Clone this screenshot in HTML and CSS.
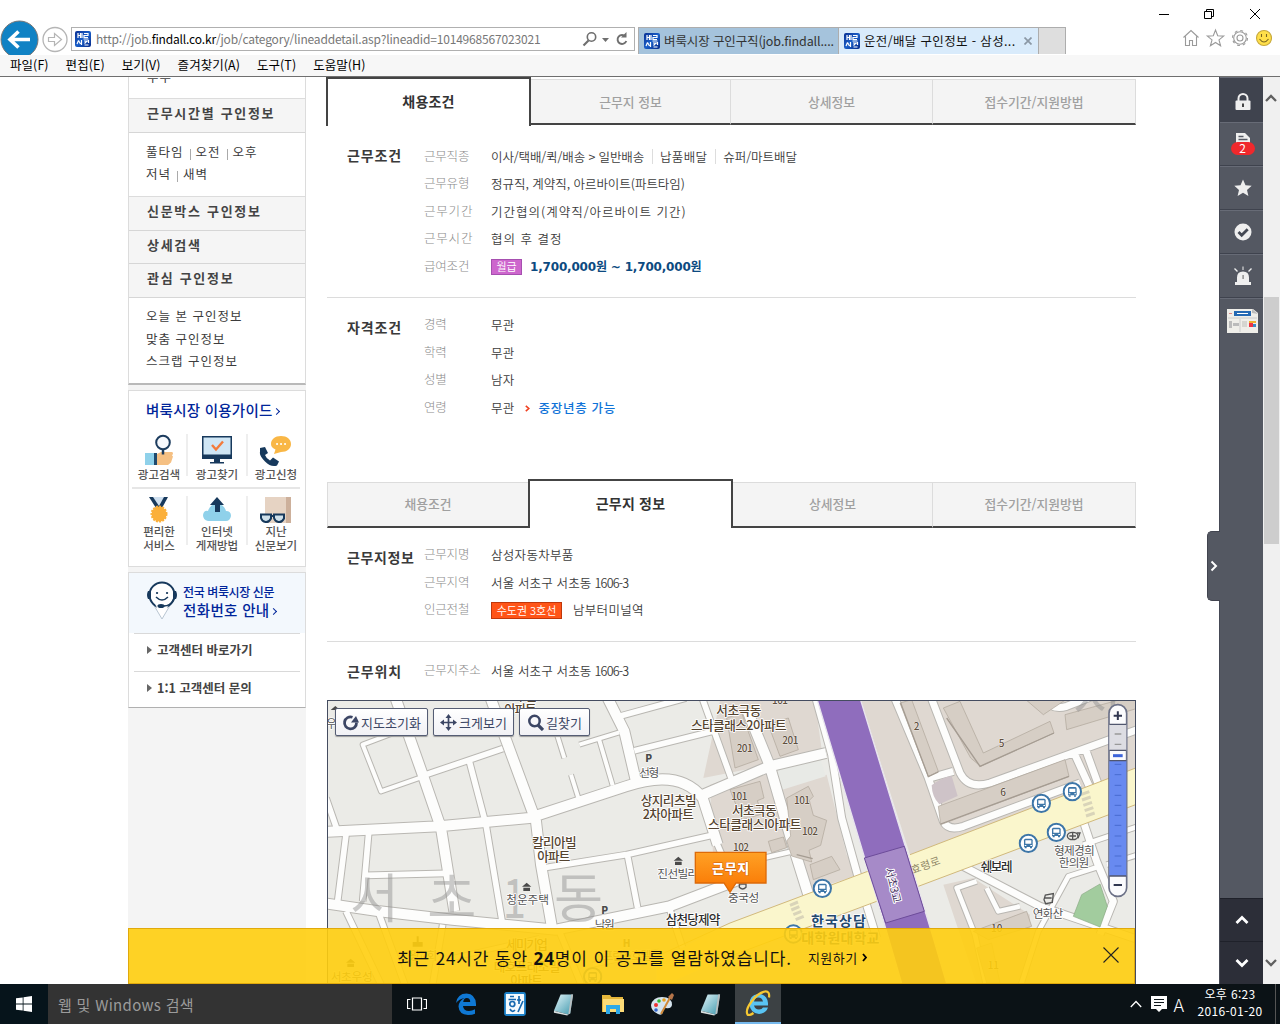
FILE: index.html
```html
<!DOCTYPE html>
<html lang="ko">
<head>
<meta charset="utf-8">
<title>운전/배달 구인정보 - 삼성자동차부품</title>
<link rel="stylesheet" href="styles.css">
</head>
<body>
<svg class="defs" width="0" height="0">
  <defs>
    <linearGradient id="gFav" x1="0" y1="0" x2="1" y2="1"><stop offset="0" stop-color="#0a2f92"/><stop offset=".5" stop-color="#1a5fc8"/><stop offset="1" stop-color="#082a88"/></linearGradient>
    <linearGradient id="gPin" x1="0" y1="0" x2="0" y2="1"><stop offset="0" stop-color="#ffa125"/><stop offset="1" stop-color="#f97400"/></linearGradient>
    <linearGradient id="gNote" x1="0" y1="0" x2="1" y2="1"><stop offset="0" stop-color="#e4f6fa"/><stop offset="1" stop-color="#3f98ad"/></linearGradient>
    <symbol id="fav" viewBox="0 0 16 16"><rect width="16" height="16" rx="2" fill="url(#gFav)"/><path d="M3 2v5M5.500 2v5M3 4.500h2.500M7 2v5M9 2.500h4v2H9v2h4M8.500 8h5M3.500 9.500 2 13M3.500 9.500 5.500 13M6.500 9v5M9 10h3l-2.500 2.500M13.500 9v3M9.500 14h4" stroke="#fff" stroke-width="1.200" fill="none"/></symbol>
    <symbol id="note" viewBox="0 0 24 24"><path d="M9 2h13l-3 20-2 1L2 19z" fill="url(#gNote)"/><path d="M22 2l-3 20-2 1 3-21z" fill="#b9bec0"/><path d="M2 19l15 4-1 1L2 21z" fill="#d8dfe0"/></symbol>
    <symbol id="bus" viewBox="0 0 60 60"><circle cx="30" cy="30" r="26" fill="#fff" stroke="#3d76a8" stroke-width="6"/><path d="M21 16h18q4 0 4 5v20H17V21q0-5 4-5z" fill="#3d76a8"/><path d="M21 21h18v10H21zM19 35h5v3h-5zM36 35h5v3h-5z" fill="#fff"/><path d="M19 41h6v4h-6zM35 41h6v4h-6z" fill="#3d76a8"/></symbol>
  </defs>
</svg>

<header class="chrome">
  <div class="bar">
    <svg class="nav" width="71" height="36" viewBox="0 0 71 36">
      <circle cx="19.500" cy="20.500" r="18.500" fill="#1082c4" stroke="#777" stroke-width="1"/>
      <path d="M10 20.500h20M18.500 12.500l-8.500 8 8.500 8" fill="none" stroke="#fff" stroke-width="3.600"/>
      <circle cx="55" cy="20.500" r="12" fill="#fff" stroke="#b5b5b5" stroke-width="1.300"/>
      <path d="M48.500 18.500h6v-4l7 6-7 6v-4h-6z" fill="none" stroke="#b5b5b5" stroke-width="1.200"/>
    </svg>
    <div class="address">
      <svg width="16" height="16"><use href="#fav"/></svg>
      <span class="url">http://job.<b>findall.co.kr</b>/job/category/lineaddetail.asp?lineadid=1014968567023021</span>
      <svg class="addr-icons" width="48" height="18" viewBox="0 0 48 18" fill="none" stroke="#6f6f6f"><circle cx="9.500" cy="7" r="4.200" stroke-width="1.600"/><path d="M6.500 10.500l-5 5" stroke-width="2.200"/><path d="M20 8h7l-3.500 4z" fill="#6f6f6f" stroke="none"/><path d="M43.500 6.500a4.500 4.500 0 1 0 .8 4.500" stroke-width="1.900"/><path d="M44.500 2v5.500H39z" fill="#6f6f6f" stroke="none"/></svg>
    </div>
    <div class="tabs">
      <div class="tab"><svg width="16" height="16"><use href="#fav"/></svg><span class="t1">벼룩시장 구인구직(job.findall....</span></div>
      <div class="tab on"><svg width="16" height="16"><use href="#fav"/></svg><span class="t2">운전/배달 구인정보 - 삼성...</span><svg class="x" width="8" height="8" viewBox="0 0 8 8"><path d="M.5.500l7 7M7.500.500l-7 7" stroke="#8b98a5" stroke-width="1.700"/></svg></div>
      <div class="tab new"></div>
    </div>
    <div class="win">
      <svg width="104" height="14" viewBox="0 0 104 14" fill="none" stroke="#000"><path d="M1 7.500h10M46.500 4.500h7v7h-7zM48.500 4v-1.500h7v7H54M92 2l10 10M102 2L92 12"/></svg>
      <svg class="tools" width="92" height="20" viewBox="0 0 92 20" fill="none" stroke="#9a9a9a" stroke-width="1.100"><path d="M3.500 9.500L11 2.500l7.500 7M5.500 8.500v9h4v-5h3v5h4v-9"/><path d="M35.500 2l2.200 5.800 6 .3-4.700 3.800 1.600 5.900-5.100-3.300-5.100 3.300 1.600-5.900-4.700-3.800 6-.3z"/><circle cx="60" cy="10" r="3"/><circle cx="60" cy="10" r="6.300"/><circle cx="60" cy="10" r="7.500" stroke-dasharray="2.900 3"/><circle cx="84" cy="10" r="7.500" fill="#ffdf4a" stroke="#c7a93c"/><path d="M81.500 6v3M86.500 6v3M79.500 11q4.500 6 9 0" stroke="#7a6420"/></svg>
    </div>
  </div>
  <nav class="menu"><span>파일(F)</span><span>편집(E)</span><span>보기(V)</span><span>즐겨찾기(A)</span><span>도구(T)</span><span>도움말(H)</span></nav>
</header>

<div class="page">
  <aside class="side">
    <section class="box first">
      <div class="cut">부부</div>
      <h3 class="h35">근무시간별 구인정보</h3>
      <div class="links two"><p>풀타임<i></i>오전<i></i>오후</p><p>저녁<i></i>새벽</p></div>
      <h3 class="h35">신문박스 구인정보</h3>
      <h3 class="h33 flat">상세검색</h3>
      <h3 class="h34 flat">관심 구인정보</h3>
      <div class="links three"><p>오늘 본 구인정보</p><p>맞춤 구인정보</p><p>스크랩 구인정보</p></div>
    </section>
    <section class="box guide">
      <h4>벼룩시장 이용가이드<b class="gt"></b></h4>
      <div class="grid g1">
        <div><svg width="32" height="32" viewBox="0 0 32 32"><path d="M2 19h10v12H2z" fill="#8fd1ea"/><path d="M11 19h3v12h-3z" fill="#1f4a6e"/><path d="M14 20l4-2h11q2 1 0 3.500l1 1-1 3-1 3-3 2.500H14z" fill="#f5c083"/><circle cx="20" cy="8.500" r="6.800" fill="#f6f9fd" stroke="#1c3c5e" stroke-width="2"/><path d="M20 15.500v5" stroke="#1c3c5e" stroke-width="2.500"/></svg><p>광고검색</p></div>
        <div><svg width="32" height="32" viewBox="0 0 32 32"><path d="M1 2h30v23H1z" fill="#17395c"/><path d="M2.500 3.500h27v17h-27z" fill="#cfe6f5"/><path d="M13 25h6v3h4v1.500H9V28h4z" fill="#17395c"/><path d="M11 11l4 4.500 7-8" fill="none" stroke="#f37b3c" stroke-width="2.400"/></svg><p>광고찾기</p></div>
        <div><svg width="34" height="32" viewBox="0 0 34 32"><path d="M22 2c6 0 10 3.500 10 8s-4 8-10 8l-7 2 1.500-4.500C13 14 12 12 12 10c0-4.500 4-8 10-8z" fill="#f9b746"/><path d="M18 10h.1M22 10h.1M26 10h.1" stroke="#fff" stroke-width="2" stroke-linecap="round"/><path d="M1 14l5-1 3 6-3 2q1.500 4 5 5.500l3-3 6 4-2 4q-6 2-12-4T1 18z" fill="#17395c"/></svg><p>광고신청</p></div>
      </div>
      <div class="grid g2">
        <div><svg width="30" height="27" viewBox="0 0 30 27"><path d="M5 1h19l-6 11h-6z" fill="#17395c"/><path d="M9 1l6 9 5-9z" fill="#cfe0f0"/><circle cx="15" cy="18" r="7.500" fill="#fbb03b" stroke="#fbb03b" stroke-width="2" stroke-dasharray="2 1.200"/></svg><p>편리한<br>서비스</p></div>
        <div><svg width="30" height="27" viewBox="0 0 30 27"><path d="M6 25q-5-1-5-6 1-5 5-4 2-7 9-7t9 7q5 0 5 5-1 5-5 5z" fill="#8fd1ea"/><path d="M15 1l7 8h-4v7h-5V9H8z" fill="#17395c"/></svg><p>인터넷<br>게재방법</p></div>
        <div><svg width="34" height="27" viewBox="0 0 34 27"><path d="M6 1h26v26H6z" fill="#e6d3c3"/><path d="M27 1h5v26h-5z" fill="#cdb09b"/><path d="M2 18.500h10v4q-2 4-5.500 3.500T2 22zM15 18.500h10v4q-2 4-5.500 3.500T15 22z" fill="#cfe0ea" stroke="#17395c" stroke-width="2"/><path d="M12 20h3" stroke="#17395c" stroke-width="2"/></svg><p>지난<br>신문보기</p></div>
      </div>
    </section>
    <section class="box call">
      <div class="tel">
        <svg width="32" height="40" viewBox="0 0 32 40"><path d="M3 16L16 38l13-22z" fill="#fff" stroke="#b9c6d2"/><circle cx="16" cy="14" r="12.500" fill="#fff" stroke="#17395c" stroke-width="2"/><path d="M9 23q7 6 14 0L16 36z" fill="#fff"/><path d="M2 10h3v8H2q-2-4 0-8zM27 10h3q2 4 0 8h-3z" fill="#17395c"/><path d="M11 12h.1M21 12h.1" stroke="#17395c" stroke-width="2.200" stroke-linecap="round"/><path d="M10 16q6 6 12 0M28 18q-3 7-11 7" fill="none" stroke="#17395c" stroke-width="1.500"/><ellipse cx="15" cy="25" rx="3.500" ry="2" fill="#17395c"/></svg>
        <div><p class="s">전국 벼룩시장 신문</p><p class="l">전화번호 안내<b class="gt"></b></p></div>
      </div>
      <div class="cs">고객센터 바로가기</div>
      <div class="cs">1:1 고객센터 문의</div>
    </section>
  </aside>

  <main class="main">
    <div class="jobtabs a"><div class="on">채용조건</div><div>근무지 정보</div><div>상세정보</div><div>접수기간/지원방법</div></div>
    <section class="sec s1">
      <h2>근무조건</h2>
      <dl>
        <dt>근무직종</dt><dd><span class="tight">이사/택배/퀵/배송 &gt; 일반배송</span><i></i><span>납품배달</span><i></i><span class="snug">슈퍼/마트배달</span></dd>
        <dt>근무유형</dt><dd class="snug">정규직, 계약직, 아르바이트(파트타임)</dd>
        <dt class="w">근무기간</dt><dd class="wide">기간협의(계약직/아르바이트 기간)</dd>
        <dt class="w">근무시간</dt><dd class="wide">협의 후 결정</dd>
        <dt>급여조건</dt><dd><em class="pay">월급</em><strong>1,700,000원 ~ 1,700,000원</strong></dd>
      </dl>
    </section>
    <section class="sec s2">
      <h2>자격조건</h2>
      <dl>
        <dt>경력</dt><dd>무관</dd>
        <dt>학력</dt><dd>무관</dd>
        <dt>성별</dt><dd>남자</dd>
        <dt>연령</dt><dd>무관<svg class="arr" width="5" height="7" viewBox="0 0 5 7"><path d="M.8.800l3 2.700-3 2.700" fill="none" stroke="#f04020" stroke-width="1.600"/></svg><a>중장년층 가능</a></dd>
      </dl>
    </section>
    <div class="jobtabs b"><div>채용조건</div><div class="on">근무지 정보</div><div>상세정보</div><div>접수기간/지원방법</div></div>
    <section class="sec s3">
      <h2>근무지정보</h2>
      <dl>
        <dt>근무지명</dt><dd>삼성자동차부품</dd>
        <dt>근무지역</dt><dd class="addr">서울 서초구 서초동 <span>1606-3</span></dd>
        <dt>인근전철</dt><dd><em class="line3">수도권 3호선</em>남부터미널역</dd>
      </dl>
    </section>
    <section class="sec s4">
      <h2>근무위치</h2>
      <dl><dt>근무지주소</dt><dd class="addr">서울 서초구 서초동 <span>1606-3</span></dd></dl>
    </section>
    <div class="map">
      <svg class="canvas" width="807" height="283" viewBox="6 9 2421 849" preserveAspectRatio="none">
        <rect x="0" y="0" width="2430" height="870" fill="#ebebe7"/>
        <g transform="translate(1212 0)">
          <path d="M393 9H1230V205L540 470zM-30 9H255l22 160L-80 240zM-60 260L110 205l75 240-235 50zM140 270l150-40 60 240 40 60-160 50zM640 560l90-20 170 110v210H740z" fill="#dfd8d1"/>
          <path d="M140 210l130-30 17 55-130 40z" fill="#e8eae6"/>
        </g>
        <defs>
          <g id="roads" fill="none" stroke-linejoin="round">
            <path class="r-wide" d="M205-10L290 230L345 390L385 640M840-10L895 100L930 250M490-10L560 180L630 370L645 500L680 700M-10 402L340 385L610 360L900 265Q1060 210 1130 300L1175 440M-10 615L160 640L380 665L690 695L1030 625L1240 545M1120 295L1330 205L1500 165M1265 40L1330 200L1400 440L1450 600"/>
            <path class="r-mid" d="M300 230L530 152M430 190L480 380L530 680M650 510L900 470L1165 410M905 475L935 630M880 55L1080 0M925 158L1160 100M1125-10L1215 240M60 410L35 610M128 405L110 610M120 532L360 526M0 300L35 400M1170 430L1220 545M60 640L170 870M350 680L320 860M700 700L770 870M1030 630L1070 750M160 650L240 870"/>
            <path class="r-thin" d="M215 100L110 140L165 280L285 238M760 140L880 103M818 120L860 262M690 100L715 180M735 230L757 300M380 780L640 720M800 800L1000 760"/>
            <g transform="translate(1212 0)">
              <path class="r-main" d="M255-10L305 170L335 360L385 540L440 720M600-10L690 225Q715 275 780 255L1250 85M490-10L595 240L640 370Q655 400 700 385L1050 255M600 240L670 220M940-10Q960 40 1010 25L1100-10M1030 160L1080 270L1060 370L1100 490L1150 610L1110 710M1065 150L1105 260M690 500L930 625L1240 730"/>
              <path class="r-side" d="M100 480L195 458M1110 505L1015 535L925 700L870 870M770 570L805 640L870 625M740 550L680 570L735 710L770 870M1060 440L1240 380M1130 500L1240 465"/>
            </g>
          </g>
        </defs>
        <use href="#roads" class="casing" stroke="#b9b7b2"/>
        <use href="#roads" stroke="#fdfdfc"/>
        <g transform="translate(1212 0)">
          <g fill="#d6cec5" stroke="#aea498" stroke-width="2">
            <path d="M-10 60l45-15 50 140-70 25zM115 80l60-20 30 95-55 20zM0 275l90-25 12 50-20 8 14 40-60 18zM170 300l65-35 15 30-12 12 12 45 40 15-18 75-35 15 8 35-60-18-15-45 12-15zM115 430l45-13 10 32-45 15z"/>
            <path d="M510 15l35-10 80 215-30 16zM640 30l50-20 70 155 200-95 12 35-220 100-30-25zM625 325l380-140 12 50-385 145zM1005 50l220-60v40l-215 65zM870-10l160 0-90 60zM730 700l160-60 15 45-130 40zM740 750l45-15 25 120h-40z"/>
            <path d="M240 500l65-25 25 40-80 30z"/>
          </g>
          <g fill="none" stroke="#a59c92" stroke-width="4"><path d="M512 15l83 221 30-14M650 60l100 145 222-100M632 378l385-143M200 470l48 12"/></g>
          <path d="M605 262q30-24 60-28l18 60-55 25q-22-22-23-57z" fill="#cec3c8"/>
          <path d="M-220 790L0 675L413 520L540 470L1230 205V315L565 565L440 610L0 775L-220 870z" fill="#faf6cc"/>
          <path d="M-220 775L0 675L413 520M540 470L1230 205M1230 315L565 565M440 610L0 775" fill="none" stroke="#d1b97c" stroke-width="3"/>
          <path d="M180 622l24-10M184 636l24-10M190 650l24-10M197 665l24-10M1052 290l26-9M1056 306l26-9M1060 322l26-9M1064 338l26-9M1068 354l26-9" stroke="#d9d4b9" stroke-width="9"/>
          <path d="M260 0H390L610 720L660 890H525L455 650z" fill="#8f6dbd" stroke="#e8e4ee" stroke-width="4"/>
          <path d="M403 480l120-35 60 195-116 35z" fill="#a68ac8" stroke="#6d4c9a" stroke-width="3"/>
          <path d="M1030 655l25-65 55-32 22 67-22 62z" fill="#a2cc9e" stroke="#8aa984" stroke-width="2"/>
          <g class="buses"><use href="#bus" x="247" y="541" width="60" height="60"/><use href="#bus" x="997" y="251" width="60" height="60"/><use href="#bus" x="904" y="286" width="60" height="60"/><use href="#bus" x="949" y="373" width="60" height="60"/><use href="#bus" x="865" y="406" width="60" height="60"/><use href="#bus" x="160" y="678" width="60" height="60"/></g>
          <g fill="none" stroke="#555" stroke-width="4"><ellipse cx="1028" cy="414" rx="16" ry="11"/><path d="M1028 404v20M1018 414h20M1040 405h10l-6 16M942 605l4-14 24-4-3 26-20 4zM945 600h20M28 558h20v10q-10 10-20 0z"/></g>
        </g>
        <use href="#bus" x="770" y="806" width="60" height="60"/>
        <g class="dong"><text x="72" y="660">서</text><text x="304" y="660">초</text><text x="530" y="660" textLength="70" lengthAdjust="spacingAndGlyphs">1</text><text x="684" y="660">동</text><text x="2240" y="60">서</text></g>
        <g class="poi" fill="#4a4a4a">
          <path d="M588 566l14-12 14 12zM592 569h20v10h-20zM1043 488l14-12 14 12zM1047 491h20v10h-20zM60 794l14-12 14 12zM64 797h20v10H64zM14 36l14-12 14 12zM260 732h30v14h-30zM272 715h6v20h-6z"/>
          <text class="p" x="958" y="192">P</text><text class="p" x="826" y="648">P</text><text class="p" x="890" y="748">H</text>
        </g>
        <g class="apt">
          <text x="535" y="5" textLength="97">오피스텔</text><text x="535" y="48" textLength="97">아파트</text>
          <text x="1171" y="52" textLength="135">서초극동</text><text x="1095" y="97" textLength="287">스타클래스2아파트</text>
          <text x="944" y="320" textLength="168">상지리츠빌</text><text x="950" y="363" textLength="154">2차아파트</text>
          <text x="1218" y="350" textLength="134">서초극동</text><text x="1146" y="394" textLength="280">스타클래스I아파트</text>
          <text x="618" y="447" textLength="134">칼리아빌</text><text x="634" y="490" textLength="99">아파트</text>
          <text x="540" y="752" textLength="126">세미기업</text><text x="503" y="818" textLength="200">대호프레조빌</text><text x="553" y="862" textLength="98">아파트</text>
        </g>
        <g class="num">
          <text x="1763" y="95">2</text><text x="2018" y="147">5</text><text x="2023" y="293">6</text><text x="1232" y="163" textLength="48">201</text><text x="1369" y="139" textLength="48">201</text><text x="1338" y="19" textLength="48">101</text><text x="1216" y="307" textLength="48">101</text><text x="1404" y="317" textLength="48">101</text><text x="1428" y="410" textLength="48">102</text><text x="1221" y="458" textLength="48">102</text><text x="1995" y="702">10</text><text x="1985" y="812">11</text>
        </g>
        <g class="plain">
          <text x="940" y="236" textLength="60">선형</text><text x="994" y="539" textLength="123">진선빌라</text><text x="541" y="618" textLength="128">청운주택</text><text x="806" y="692" textLength="60">낙원</text>
          <text x="1206" y="611" textLength="94">중국성</text><text x="2184" y="470" textLength="122">형제경희</text><text x="2198" y="507" textLength="92">한의원</text><text x="2120" y="660" textLength="92">연화산</text>
          <text x="14" y="848" textLength="126">서초우성</text><text x="250" y="785" textLength="84">왕교회</text><text x="830" y="785" textLength="146">프린스호텔</text><text x="0" y="90" textLength="60">우성</text>
        </g>
        <g class="bold"><text x="1019" y="677" textLength="164">삼천당제약</text><text x="1964" y="520" textLength="96">쉐보레</text></g>
        <text class="road" transform="translate(1760 528) rotate(-20)" textLength="90">효령로</text>
        <text class="bridge" transform="translate(1677 512) rotate(76)" textLength="108">서초3교</text>
        <g class="school"><text x="1455" y="683" textLength="165">한국상담</text><text x="1426" y="734" textLength="234">대학원대학교</text></g>
        <path d="M1108 463h212v92h-90l-18 28-18-28h-86z" fill="url(#gPin)" stroke="#dd6a08" stroke-width="4"/>
        <text class="pin" x="1158" y="524" textLength="112">근무지</text>
        <g transform="translate(1212 0)">
          <rect x="1137" y="20" width="53" height="575" rx="26" fill="#fbfbfd" stroke="#6c7187" stroke-width="5"/>
          <path d="M1138 79h51v79h-51z" fill="#dddde3"/><path d="M1138 188h51v346h-51z" fill="#688af0"/>
          <path d="M1138 79h51M1138 157h51M1138 188h51M1138 534h51" stroke="#50566e" stroke-width="4"/>
          <path d="M1154 108h20M1154 139h20" stroke="#999" stroke-width="4"/>
          <path d="M1154 199h20M1154 230h20M1154 262h20M1154 292h20M1154 322h20M1154 352h20M1154 382h20M1154 414h20M1154 444h20M1154 474h20M1154 504h20" stroke="#496cd0" stroke-width="3"/>
          <path d="M1149 173h29" stroke="#3d64da" stroke-width="9"/>
          <path d="M1151 53h25M1163.500 40v26M1151 561h25" stroke="#303650" stroke-width="6"/>
        </g>
      </svg>
      <div class="mapbtns">
        <button><svg width="17" height="17" viewBox="0 0 17 17"><path d="M10.500 3.200a6 6 0 1 0 4 5.300" fill="none" stroke="#3c4664" stroke-width="2.800"/><path d="M9 8.500h8L14 2z" fill="#3c4664"/></svg><span>지도초기화</span></button>
        <button><svg width="17" height="17" viewBox="0 0 17 17"><path d="M8.500 2v13M2 8.500h13" stroke="#3c4664" stroke-width="1.700"/><path d="M8.500 0l3 4h-6zM8.500 17l3-4h-6zM0 8.500l4-3v6zM17 8.500l-4-3v6z" fill="#3c4664"/></svg><span>크게보기</span></button>
        <button><svg width="17" height="17" viewBox="0 0 17 17"><circle cx="7.500" cy="7" r="5.200" fill="none" stroke="#3c4664" stroke-width="2.500"/><path d="M11 11l5 5" stroke="#3c4664" stroke-width="3.200"/></svg><span>길찾기</span></button>
      </div>
    </div>
  </main>

  <div class="rail">
    <div class="cell lock"><svg width="20" height="20" viewBox="0 0 20 20"><path d="M5.500 9V6.500a4.500 4.500 0 0 1 9 0V9" fill="none" stroke="#efefef" stroke-width="2"/><rect x="2.500" y="8.500" width="15" height="9.500" rx="1" fill="#efefef"/><path d="M9 11.500h2v3.500H9z" fill="#444"/></svg></div>
    <div class="cell doc"><svg width="16" height="12" viewBox="0 0 16 12"><path d="M1 0h9l5 5v7H1z" fill="#efefef"/><path d="M3.500 3.500h5M3.500 6.500h9" stroke="#555963" stroke-width="1.500"/></svg><span class="badge">2</span></div>
    <div class="cell"><svg width="20" height="20" viewBox="0 0 20 20"><path d="M10 1.500l2.500 5.700 6.200.6-4.700 4.100 1.400 6.100-5.400-3.200L4.600 18 6 11.900 1.300 7.800l6.200-.6z" fill="#efefef"/></svg></div>
    <div class="cell"><svg width="20" height="20" viewBox="0 0 20 20"><circle cx="10" cy="10" r="8.500" fill="#efefef"/><path d="M5.500 10l3.200 3.200 6-6" fill="none" stroke="#454954" stroke-width="2.800"/></svg></div>
    <div class="cell"><svg width="20" height="22" viewBox="0 0 20 22"><path d="M4 17v-4.500q0-6 6-6t6 6V17h2v3H2v-3zM9.500 1.500h1v3.500h-1z" fill="#efefef"/><path d="M1.500 3.500L4.500 6.500M18.500 3.500L15.500 6.500" stroke="#efefef" stroke-width="1.400"/><path d="M9.500 10h1.200v4H9.500z" fill="#777"/></svg></div>
    <div class="paper"><svg width="33" height="26" viewBox="0 0 33 26"><path d="M1 1h26l5 4v20H1z" fill="#efeee9"/><path d="M26 1l6 5-6-1z" fill="#bbb"/><path d="M8 3h17v5H8z" fill="#2368b3"/><path d="M11 5.500h11" stroke="#fff"/><path d="M3 5.500h3" stroke="#d88"/><path d="M2 10h29M14 11v13" stroke="#ccc"/><path d="M7 15h6v3H7zM3 13h3v7H3z" fill="#bbb"/><path d="M23 13h7v2h-7z" fill="#f0b030"/><path d="M23 15h4v4h-4z" fill="#e34"/><path d="M27 16h3v3h-3z" fill="#3b8ac4"/><path d="M16 13h5v6h-5z" fill="#d5d5d0"/></svg></div>
    <div class="updown"><div><svg width="14" height="10" viewBox="0 0 14 10"><path d="M1.500 8L7 2.500 12.500 8" fill="none" stroke="#fff" stroke-width="2.800"/></svg></div><div><svg width="14" height="10" viewBox="0 0 14 10"><path d="M1.500 2L7 7.500 12.500 2" fill="none" stroke="#fff" stroke-width="2.800"/></svg></div></div>
  </div>
  <div class="scroll">
    <svg width="14" height="10" viewBox="0 0 14 10"><path d="M2 8l5-5 5 5" fill="none" stroke="#606060" stroke-width="2.300"/></svg>
    <div class="thumb"></div>
    <svg width="14" height="10" viewBox="0 0 14 10"><path d="M2 2l5 5 5-5" fill="none" stroke="#606060" stroke-width="2.300"/></svg>
  </div>
  <div class="handle"><svg width="8" height="12" viewBox="0 0 8 12"><path d="M1.500 1.500L6 6l-4.500 4.500" fill="none" stroke="#fff" stroke-width="2"/></svg></div>
  <div class="notice"><span class="msg">최근 24시간 동안 <b>24</b>명이 이 공고를 열람하였습니다.</span><span class="apply">지원하기</span><svg class="chev" width="6" height="9" viewBox="0 0 6 9"><path d="M1 1l3 3.500L1 8" fill="none" stroke="#000" stroke-width="1.800"/></svg><svg class="close" width="16" height="16" viewBox="0 0 16 16"><path d="M.5.500l15 15M15.500.500l-15 15" stroke="#222" stroke-width="1.100"/></svg></div>
</div>

<footer class="taskbar">
  <div class="start"><svg width="16" height="16" viewBox="0 0 16 16"><path d="M0 2.300L6.700 1.400v6.200H0zM7.500 1.200L16 0v7.600H7.500zM0 8.400h6.700v6.200L0 13.700zM7.500 8.400H16V16l-8.500-1.200z" fill="#fff"/></svg></div>
  <div class="search">웹 및 Windows 검색</div>
  <div class="apps">
    <div><svg width="20" height="14" viewBox="0 0 20 14" fill="none" stroke="#fff" stroke-width="1.200"><path d="M5.500 1h9v12h-9zM3.500 2.500h-3v9h3M16.500 2.500h3v9h-3"/></svg></div>
    <div><svg width="22" height="24" viewBox="0 0 22 24"><path d="M1 11Q2.500 1.500 11.500 1.500 20.500 2 21 12v2H8q.5 5 6 5 3 0 6-1.700v4.500Q17.500 23 13 23 4 22.500 3.500 14.500 4 8.500 9.500 6 4 7 1 11zM8.200 10h7q0-4-3.400-4-3 .2-3.600 4z" fill="#0f78d4"/></svg></div>
    <div><svg width="22" height="24" viewBox="0 0 22 24"><rect x="1" y="1" width="20" height="22" rx="1.500" fill="#f4fafe" stroke="#1b80c8" stroke-width="1.800"/><path d="M6 4.500h4M4.500 7.500H12M15 4v8M13 8h4M6 17q2 4 5 1M19 9l-5 11" fill="none" stroke="#1668b0" stroke-width="1.700"/><circle cx="8.300" cy="12" r="2.500" fill="none" stroke="#1668b0" stroke-width="1.700"/></svg></div>
    <div><svg width="23" height="24"><use href="#note"/></svg></div>
    <div><svg width="24" height="22" viewBox="0 0 24 22"><path d="M1 2h8l1.500 2H22v15H1z" fill="#e6b73b"/><path d="M2 6h21v13H2z" fill="#fddb77"/><path d="M5 12h14v9h-4v-5H9v5H5z" fill="#2fa9e8"/></svg></div>
    <div><svg width="24" height="24" viewBox="0 0 24 24"><path d="M12 5q10 0 10 8-1 4-6 3-4 0-3 4-1 4-5 2Q1 19 1 13q2-8 11-8z" fill="#d6e4ee"/><circle cx="6" cy="13" r="2" fill="#e33"/><circle cx="9" cy="9" r="1.800" fill="#3b3"/><circle cx="14" cy="8" r="1.800" fill="#e8a020"/><circle cx="6" cy="18" r="1.800" fill="#36c"/><path d="M21 4L11 22" stroke="#d08a3a" stroke-width="2"/><path d="M18 5l4-4 2 2-2 5z" fill="#b5754a"/></svg></div>
    <div><svg width="23" height="24"><use href="#note"/></svg></div>
    <div class="on"><svg width="26" height="26" viewBox="0 0 26 26"><path d="M13 4q9 0 10 9v2.500H9q1 4 5 4 3 0 4-2h5q-2 6-9 6.500-9-1-9.500-10Q4.500 5 13 4zM9 11.500h9q-1-4-4.500-4-3.700.200-4.500 4z" fill="#59c4f3"/><path d="M24 7.500Q25 1 20 1.500 13 3 7 11 0 20 2.500 24.500q2 1.500 6-1.500" fill="none" stroke="#f6c832" stroke-width="2.200"/></svg></div>
  </div>
  <div class="tray">
    <svg width="12" height="8" viewBox="0 0 12 8"><path d="M.8 7L6 1.500 11.200 7" fill="none" stroke="#fff" stroke-width="1.300"/></svg>
    <svg width="16" height="16" viewBox="0 0 16 16"><path d="M0 0h16v13h-5l-3 3-3-3H0z" fill="#fff"/><path d="M3 3.500h10M3 6.500h10M3 9.500h7" stroke="#10181c"/></svg>
    <span class="ime">A</span>
    <div class="clock"><span>오후 6:23</span><span>2016-01-20</span></div>
    <i></i>
  </div>
</footer>
</body>
</html>
```
FILE: styles.css
```css
* { box-sizing: border-box; margin: 0; padding: 0; }
html, body { width: 1280px; height: 1024px; overflow: hidden; }
body { background: #fff; font-family: "Noto Sans CJK KR", "Noto Sans", sans-serif; font-size: 12.5px; color: #3c3c3c; display: flex; flex-direction: column; line-height: 1; white-space: nowrap; }
svg { display: block; flex: none; }
.defs { position: absolute; }
em { font-style: normal; }

.chrome { height: 77px; border-bottom: 1px solid #6f6f6f; flex: none; }
.bar { height: 55px; display: flex; align-items: flex-start; }
.nav { margin-top: 19px; }
.address { margin-top: 27px; width: 564px; height: 24px; border: 1px solid #b0b0b0; display: flex; align-items: center; padding-left: 3px; }
.url { margin-left: 5px; font-size: 12px; color: #777; letter-spacing: -.18px; }
.url b { color: #000; font-weight: 400; }
.addr-icons { margin-left: auto; margin-right: 4px; }
.tabs { margin: 27px 0 0 3px; display: flex; height: 27px; border: 1px solid #adadad; border-bottom: 0; }
.tab { width: 200px; background: #a5c3dc; border-right: 1px solid #adadad; display: flex; align-items: center; padding-left: 5px; color: #333; }
.tab.on { background: #d9ebfb; color: #111; padding-left: 5px; }
.tab.new { width: 26px; background: #dedede; border: 0; }
.tab span { margin-left: 4px; font-size: 12.500px; }
.t1 { letter-spacing: -.12px; }
.t2 { letter-spacing: .35px; }
.tab .x { margin-left: auto; margin-right: 6px; }
.win { margin-left: auto; display: flex; flex-direction: column; align-items: flex-end; padding: 7px 6px 0 0; gap: 7px; }
.win svg:first-child { margin-right: 12px; }
.tools { margin-right: 2px; }
.menu { height: 21px; background: #f7f7f7; display: flex; align-items: center; gap: 17px; padding-left: 10px; color: #000; font-size: 12.500px; letter-spacing: .05px; }

.page { height: 907px; flex: none; display: flex; position: relative; overflow: hidden; padding-left: 128px; background: #fff; }
.side { width: 178px; background: #f4f4f4; display: flex; flex-direction: column; gap: 5px; }
.box { background: #fff; border: 1px solid #dcdcdc; flex: none; overflow: hidden; }
.first { height: 308px; border-top: 0; border-bottom: 2px solid #b9b9b9; }
.cut { height: 21px; padding-left: 18px; overflow: hidden; line-height: 0; letter-spacing: 1px; }
.side h3 { background: #f5f5f5; border-top: 1px solid #dcdcdc; border-bottom: 1px solid #d6d6d6; font-size: 13px; font-weight: 600; letter-spacing: 1.700px; padding: 0 0 6px 18px; display: flex; align-items: center; color: #444; }
.side h3.flat { border-top: 0; }
.h35 { height: 35px; } .h34 { height: 34px; } .h33 { height: 33px; }
.links { padding-left: 17px; letter-spacing: 1px; }
.links p { line-height: 22px; display: flex; align-items: center; }
.links i { width: 1px; height: 11px; background: #aaa; margin: 4px 5px 0 6px; }
.two { height: 63px; padding-top: 8px; }
.three { padding-top: 7px; }
.three p { line-height: 22.500px; }
.guide { height: 177px; }
.gt { display: inline-block; width: 5px; height: 5px; border: solid #00259a; border-width: 1.500px 1.500px 0 0; transform: rotate(45deg); margin: 0 0 2px 1px; }
.guide h4 { font-size: 14.500px; font-weight: 500; color: #00259a; padding: 12px 0 0 17px; height: 43px; letter-spacing: .25px; }
.grid { display: grid; grid-template-columns: 56px 60px 56px; margin: 0 0 0 3px; }
.grid div { display: flex; flex-direction: column; align-items: center; border-right: 2px solid #eee; height: 42px; }
.grid div:last-child { border: 0; }
.grid p { font-size: 11.500px; letter-spacing: 0; line-height: 13.500px; text-align: center; font-weight: 500; color: #555; margin-top: 2px; }
.g1 { height: 55px; margin-right: 5px; border-bottom: 2px solid #e6e6e6; }
.g2 { padding-top: 7px; }
.g2 div { height: 49px; }
.call { height: 136px; border-bottom: 1px solid #b0b0b0; }
.tel { height: 60px; background: #f3f8fd; display: flex; padding: 8px 0 0 17px; color: #00259a; font-weight: 500; }
.tel div { margin-left: 5px; }
.tel .s { font-size: 12px; margin-top: 5px; letter-spacing: -.4px; }
.tel .l { font-size: 14.500px; margin-top: 5px; letter-spacing: .35px; }
.cs { margin: 0 5px; border-top: 1px solid #d9d9d9; height: 38px; padding: 0 0 5px 13px; display: flex; align-items: center; font-size: 12.500px; font-weight: 600; letter-spacing: 0; color: #444; }
.cs::before { content: ""; border: 4px solid transparent; border-left: 5px solid #666; border-right: 0; margin-right: 5px; }

.main { width: 810px; margin-left: 20px; flex: none; }
.jobtabs { display: flex; height: 49px; align-items: flex-end; font-size: 12.800px; font-weight: 500; color: #a0a0a0; }
.jobtabs div { height: 46px; width: 202px; background: #f4f4f4; border: solid #dcdcdc; border-width: 1px 1px 0 0; border-bottom: 2px solid #444; display: flex; align-items: center; justify-content: center; }
.jobtabs.a div { padding-top: 2px; margin-bottom: 1px; }
.jobtabs .on, .jobtabs.a .on { height: 49px; margin: 0; width: 205px; background: #fff; border: 2px solid #444; border-bottom: 0; color: #333; font-size: 14px; font-weight: 700; padding: 0 0 3px; letter-spacing: .2px; }
.jobtabs.b { padding-left: 1px; }
.jobtabs.b .on { width: 205px; margin-left: -1px; }
.jobtabs.a div:nth-child(2) { width: 200px; }
.jobtabs.b div:nth-child(3) { width: 200px; }
.jobtabs div:last-child { width: 203px; }
.jobtabs.b div:first-child { border-left-width: 1px; }
.sec { display: flex; margin-left: 1px; border-bottom: 1px solid #dcdcdc; }
.sec h2 { width: 97px; padding: 5px 0 0 20px; font-size: 14px; font-weight: 700; color: #3a3a3a; height: 20px; letter-spacing: .9px; }
.sec dl { display: grid; grid-template-columns: 67px 600px; grid-auto-rows: 27.500px; align-items: center; align-content: start; }
.sec dt { color: #8c8c8c; letter-spacing: -.2px; padding-bottom: 2px; font-weight: 300; }
.sec dt.w { letter-spacing: .8px; }
.sec dd { display: flex; align-items: center; letter-spacing: .3px; font-weight: 350; }
.sec dd i { width: 1px; height: 15px; background: #ddd; margin: 0 7px 0 8px; }
.sec .tight { letter-spacing: -.12px; }
.sec .snug { letter-spacing: -.03px; }
.sec .wide { letter-spacing: 1px; }
.sec .addr { letter-spacing: .15px; }
.addr span { letter-spacing: -.8px; margin-left: 3px; }
.s1 { height: 172px; padding-top: 17px; }
.s2 { height: 181px; padding-top: 13px; border: 0; }
.s3 { height: 114px; padding-top: 13px; }
.s4 { height: 58px; padding-top: 15px; border: 0; }
.s2 dl, .s3 dl { grid-auto-rows: 27.900px; }
.s2 h2, .s3 h2 { padding-top: 9px; }
.s3 h2 { letter-spacing: .6px; }
.s4 h2 { padding-top: 7px; }
.pay, .line3 { background: #cd66cd; border: 1px solid #a64fb0; color: #fff; width: 31px; height: 16px; display: flex; align-items: center; justify-content: center; font-size: 11px; letter-spacing: 0; margin-right: 8px; }
.line3 { background: #ff5417; border-color: #c0370a; width: 71px; height: 17px; margin-right: 11px; }
.sec strong { font-family: "DejaVu Sans", "Noto Sans CJK KR", sans-serif; font-size: 12px; color: #0c4a80; letter-spacing: -.18px; }
.arr { margin: 0 9px 0 10px; }
.sec a { color: #0f73d8; font-weight: 500; letter-spacing: .7px; }

.map { margin-left: 1px; width: 809px; height: 285px; border: 1px solid #444c60; position: relative; }
.r-wide { stroke-width: calc(30px + var(--edge, 0px)); }
.r-mid { stroke-width: calc(17px + var(--edge, 0px)); }
.r-thin { stroke-width: calc(12px + var(--edge, 0px)); }
.r-main { stroke-width: calc(21px + var(--edge, 0px)); }
.r-side { stroke-width: calc(14px + var(--edge, 0px)); }
.casing { --edge: 6px; }
.canvas text { font-size: 38px; paint-order: stroke; stroke: #fff; stroke-width: 5px; stroke-linejoin: round; }
.canvas .dong text { font-size: 160px; font-weight: 400; fill: #8c8c8c; fill-opacity: .45; stroke: none; }
.apt text { fill: #54432f; font-weight: 500; }
.num text { fill: #5f4f3e; }
.canvas .num text { font-size: 30px; font-weight: 500; stroke-width: 2px; }
.plain text { fill: #555; }
.canvas .plain text { font-size: 35px; }
.bold text { fill: #2d2d2d; font-weight: 500; }
.canvas .p { font-size: 30px; font-weight: 900; stroke-width: 2px; }
.canvas .road { font-size: 32px; fill: #8f8666; stroke: none; }
.canvas .bridge { font-size: 33px; fill: #44305e; stroke-width: 6px; }
.canvas .school text { font-size: 42px; font-weight: 700; fill: #22486e; }
.canvas .pin { font-size: 39px; font-weight: 900; fill: #fff; stroke: #cf5a00; stroke-width: 3px; }
.mapbtns { position: absolute; left: 7px; top: 7px; display: flex; gap: 5px; }
.mapbtns button { height: 28px; background: linear-gradient(#fff, #f1f1f5); border: 1px solid #555d74; border-radius: 2px; box-shadow: 0 1px 1px #999; font: 13px "Noto Sans CJK KR", sans-serif; color: #3c4664; display: flex; align-items: center; justify-content: center; gap: 2px; width: 93px; }
.mapbtns button:nth-child(2) { width: 81px; }
.mapbtns button:nth-child(3) { width: 71px; }

.rail { width: 44px; margin-left: 83px; background: #545862; border-left: 1px solid #454955; flex: none; display: flex; flex-direction: column; }
.cell { height: 44px; border-top: 1px solid #676b76; border-bottom: 1px solid #3f434e; display: flex; flex-direction: column; align-items: center; justify-content: center; flex: none; padding-left: 2px; }
.lock { height: 45px; background: #3f434e; padding-top: 4px; }
.badge { background: #f0282c; color: #fff; width: 24px; height: 13px; border-radius: 7px; font-size: 12px; line-height: 12px; text-align: center; margin-top: -3px; }
.paper { border-top: 1px solid #676b76; padding: 9px 0 0 6px; flex: 1; }
.updown div { height: 43px; background: #2c2e38; border-top: 1px solid #1f212a; display: flex; align-items: center; justify-content: center; }
.scroll { width: 17px; background: #f0f0f0; flex: none; display: flex; flex-direction: column; padding: 16px 0 16px 1px; }
.thumb { height: 247px; width: 15px; background: #cdcdcd; margin: 194px 0 auto; }
.handle { position: absolute; left: 1207px; top: 454px; width: 13px; height: 70px; background: #545862; border-radius: 5px 0 0 5px; border: 1px solid #41444f; border-right: 0; display: flex; align-items: center; justify-content: center; }
.notice { position: absolute; left: 128px; top: 851px; width: 1007px; height: 56px; background: rgba(255, 206, 14, .9); border: 1px solid #e0a90c; display: flex; align-items: center; padding: 3px 0 0 268px; color: #111; }
.msg { font-size: 17px; letter-spacing: .87px; }
.msg b { font-family: "Open Sans", "Noto Sans"; font-weight: 700; }
.apply { font-size: 13px; margin-left: 16px; letter-spacing: .5px; }
.chev { margin-left: 4px; }
.close { margin-left: auto; margin-right: 15px; margin-top: -6px; }

.taskbar { height: 40px; flex: none; background: #0b1216; display: flex; align-items: stretch; }
.taskbar > div { display: flex; align-items: center; }
.start { width: 48px; justify-content: center; background: #06141b; }
.taskbar .search { width: 344px; background: #333; color: #9b9b9b; font-size: 15px; letter-spacing: .3px; padding-left: 10px; }
.apps div { width: 49px; height: 40px; display: flex; align-items: center; justify-content: center; }
.apps div.on { width: 46px; background: #3c4144; border-bottom: 2px solid #76b9ed; }
.tray { margin-left: auto; color: #fff; gap: 9px; }
.ime { font-size: 18px; font-weight: 300; margin-left: -3px; padding-right: 1px; }
.tray svg:first-child { margin-left: -4px; }
.clock { display: flex; flex-direction: column; align-items: center; gap: 5px; font-size: 12px; width: 72px; letter-spacing: .35px; padding-bottom: 4px; }
.tray i { width: 1px; align-self: stretch; background: #555; margin-right: 4px; }
```
